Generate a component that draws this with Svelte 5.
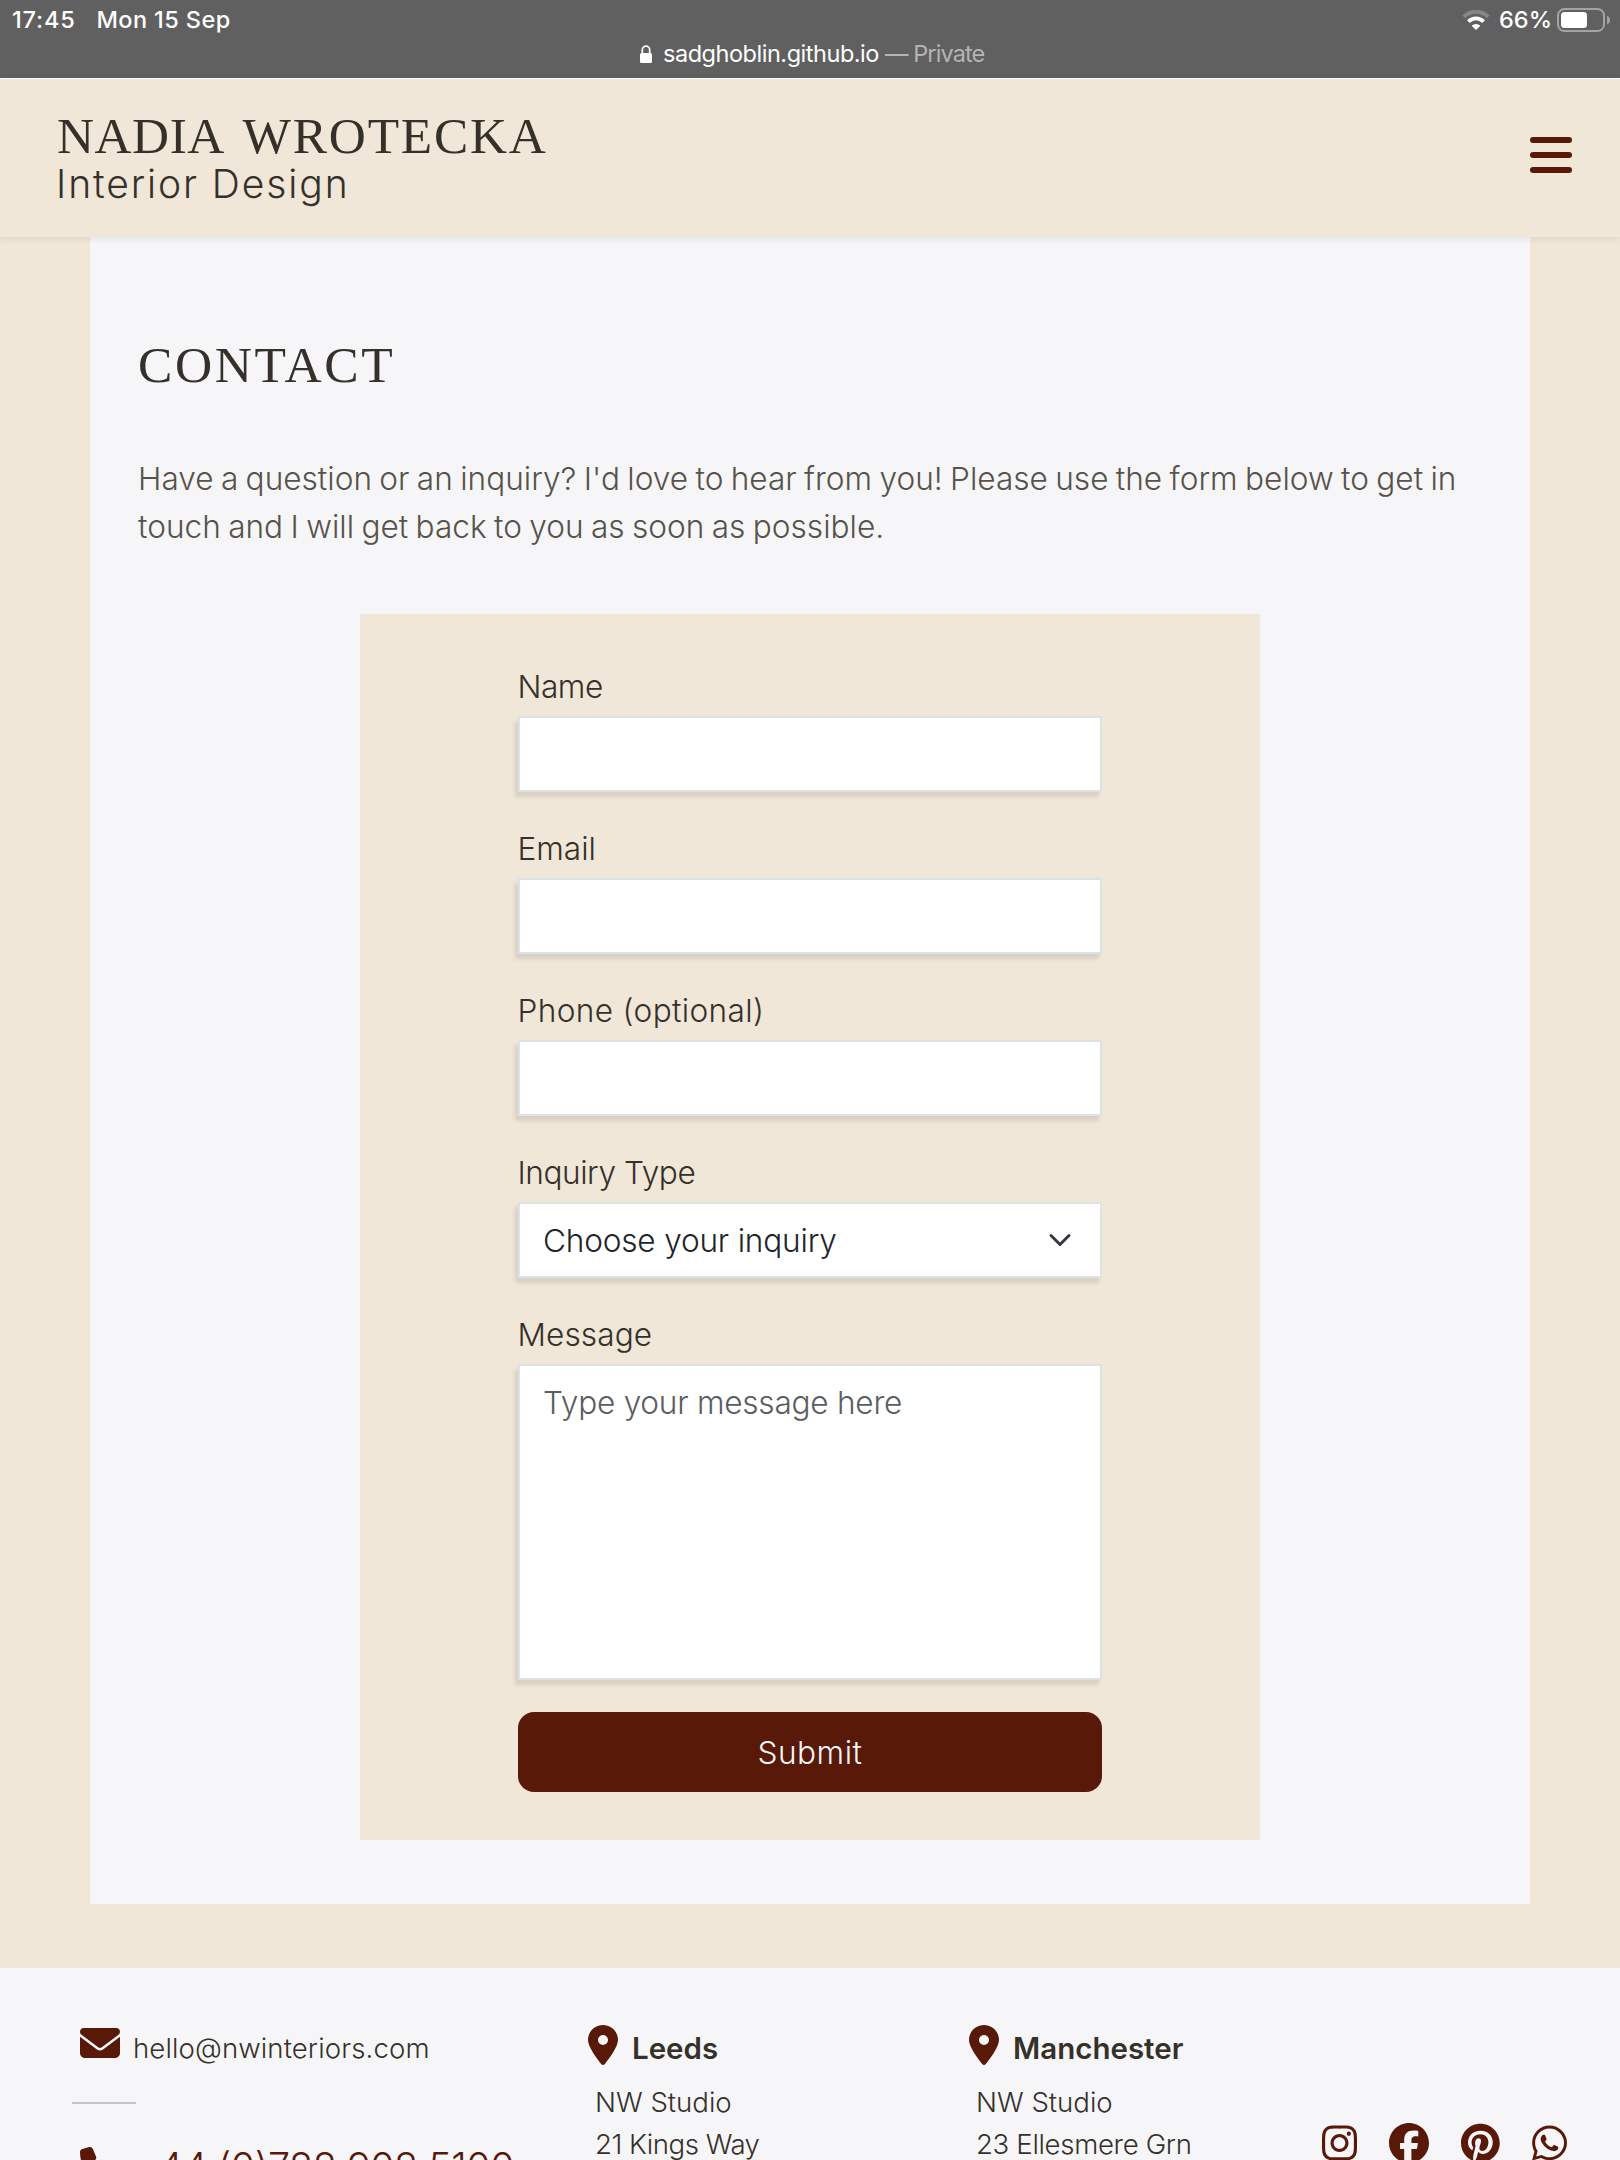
<script>
  const fields = [
    { id: 'name', label: 'Name', type: 'text' },
    { id: 'email', label: 'Email', type: 'email' },
    { id: 'phone', label: 'Phone (optional)', type: 'tel' },
  ];

  const studios = [
    { city: 'Leeds', key: 'leeds', street: '21 Kings Way' },
    { city: 'Manchester', key: 'manchester', street: '23 Ellesmere Grn' },
  ];

  const socials = [
    {
      name: 'Instagram',
      width: 448,
      d: 'M224.1 141c-63.6 0-114.9 51.3-114.9 114.9s51.3 114.9 114.9 114.9S339 319.5 339 255.9 287.7 141 224.1 141zm0 189.6c-41.1 0-74.7-33.5-74.7-74.7s33.5-74.7 74.7-74.7 74.7 33.5 74.7 74.7-33.6 74.7-74.7 74.7zm146.4-194.3c0 14.9-12 26.8-26.8 26.8-14.9 0-26.8-12-26.8-26.8s12-26.8 26.8-26.8 26.8 12 26.8 26.8zm76.1 27.2c-1.7-35.9-9.9-67.7-36.2-93.9-26.2-26.2-58-34.4-93.9-36.2-37-2.1-147.9-2.1-184.9 0-35.8 1.7-67.6 9.9-93.9 36.1s-34.4 58-36.2 93.9c-2.1 37-2.1 147.9 0 184.9 1.7 35.9 9.9 67.7 36.2 93.9s58 34.4 93.9 36.2c37 2.1 147.9 2.1 184.9 0 35.9-1.7 67.7-9.9 93.9-36.2 26.2-26.2 34.4-58 36.2-93.9 2.1-37 2.1-147.8 0-184.8zM398.8 388c-7.8 19.6-22.9 34.7-42.6 42.6-29.5 11.7-99.5 9-132.1 9s-102.7 2.6-132.1-9c-19.6-7.8-34.7-22.9-42.6-42.6-11.7-29.5-9-99.5-9-132.1s-2.6-102.7 9-132.1c7.8-19.6 22.9-34.7 42.6-42.6 29.5-11.7 99.5-9 132.1-9s102.7-2.6 132.1 9c19.6 7.8 34.7 22.9 42.6 42.6 11.7 29.5 9 99.5 9 132.1s2.7 102.7-9 132.1z',
    },
    {
      name: 'Facebook',
      width: 512,
      d: 'M512 256C512 114.6 397.4 0 256 0S0 114.6 0 256C0 376 82.7 476.8 194.2 504.5V334.2H141.4V256h52.8V222.3c0-87.1 39.4-127.5 125-127.5c16.2 0 44.2 3.2 55.7 6.4V172c-6-.6-16.5-1-29.6-1c-42 0-58.2 15.9-58.2 57.2V256h83.6l-14.4 78.2H287V510.1C413.8 494.8 512 386.9 512 256h0z',
    },
    {
      name: 'Pinterest',
      width: 496,
      d: 'M496 256c0 137-111 248-248 248-25.6 0-50.2-3.9-73.4-11.1 10.1-16.5 25.2-43.5 30.8-65 3-11.6 15.4-59 15.4-59 8.1 15.4 31.7 28.5 56.8 28.5 74.8 0 128.7-68.8 128.7-154.3 0-81.9-66.9-143.2-152.9-143.2-107 0-163.9 71.8-163.9 150.1 0 36.4 19.4 81.7 50.3 96.1 4.7 2.2 7.2 1.2 8.3-3.3.8-3.4 5-20.3 6.9-28.1.6-2.5.3-4.7-1.7-7.1-10.1-12.5-18.3-35.3-18.3-56.6 0-54.7 41.4-107.6 112-107.6 60.9 0 103.6 41.5 103.6 100.9 0 67.1-33.9 113.6-78 113.6-24.3 0-42.6-20.1-36.7-44.8 7-29.5 20.5-61.3 20.5-82.6 0-19-10.2-34.9-31.4-34.9-24.9 0-44.9 25.7-44.9 60.2 0 22 7.4 36.8 7.4 36.8s-24.5 103.8-29 123.2c-5 21.4-3 51.6-.9 71.2C65.4 450.9 0 361.1 0 256 0 119 111 8 248 8s248 111 248 248z',
    },
    {
      name: 'WhatsApp',
      width: 448,
      d: 'M380.9 97.1C339 55.1 283.2 32 223.9 32c-122.4 0-222 99.6-222 222 0 39.1 10.2 77.3 29.6 111L0 480l117.7-30.9c32.4 17.7 68.9 27 106.1 27h.1c122.3 0 224.1-99.6 224.1-222 0-59.3-25.2-115-67.1-157zm-157 341.6c-33.2 0-65.7-8.9-94-25.7l-6.7-4-69.8 18.3L72 359.2l-4.4-7c-18.5-29.4-28.2-63.3-28.2-98.2 0-101.7 82.8-184.5 184.6-184.5 49.3 0 95.6 19.2 130.4 54.1 34.8 34.9 56.2 81.2 56.1 130.5 0 101.8-84.9 184.6-186.6 184.6zm101.2-138.2c-5.5-2.8-32.8-16.2-37.9-18-5.1-1.9-8.8-2.8-12.5 2.8-3.7 5.6-14.3 18-17.6 21.8-3.2 3.7-6.5 4.2-12 1.4-32.6-16.3-54-29.1-75.5-66-5.7-9.8 5.7-9.1 16.3-30.3 1.8-3.7.9-6.9-.5-9.7-1.4-2.8-12.5-30.1-17.1-41.2-4.5-10.8-9.1-9.3-12.5-9.5-3.2-.2-6.9-.2-10.6-.2-3.7 0-9.7 1.4-14.8 6.9-5.1 5.6-19.4 19-19.4 46.3 0 27.3 19.9 53.7 22.6 57.4 2.8 3.7 39.1 59.7 94.8 83.8 35.2 15.2 49 16.5 66.6 13.9 10.7-1.6 32.8-13.4 37.4-26.4 4.6-13 4.6-24.1 3.2-26.4-1.3-2.5-5-3.9-10.5-6.6z',
    },
  ];
</script>

<div class="screen">
  <div class="device-bar">
    <div class="status-row">
      <span class="clock">17:45</span>
      <span class="date">Mon 15 Sep</span>
      <svg class="wifi" viewBox="0 0 28 20" width="28" height="20" fill="none">
        <path d="M1.8 6.8A17 17 0 0 1 26.2 6.8" stroke="#858585" stroke-width="4" />
        <path d="M6.4 11.6A10.8 10.8 0 0 1 21.6 11.6" stroke="#fff" stroke-width="3.8" />
        <path d="M14 20l-4.4-4.3a6.3 6.3 0 0 1 8.8 0z" fill="#fff" />
      </svg>
      <span class="percent">66%</span>
      <svg class="battery" viewBox="0 0 54 24" width="54" height="24">
        <rect x="1" y="1" width="46" height="22" rx="6.5" fill="none" stroke="#a3a3a3" stroke-width="2" />
        <rect x="4" y="4" width="26" height="16" rx="3.5" fill="#fff" />
        <path d="M50 8c4 1 4 7 0 8.500z" fill="#a3a3a3" />
      </svg>
    </div>
    <div class="address-row">
      <svg class="lock" viewBox="0 0 12 18" width="12" height="18">
        <path d="M2.300 8.500V5a3.700 3.900 0 0 1 7.400 0v3.500" fill="none" stroke="#fff" stroke-width="1.700" />
        <rect x="0" y="8" width="12" height="10" rx="1.500" fill="#fff" />
      </svg>
      <span class="host">sadghoblin.github.io</span>
      <span class="private">— Private</span>
    </div>
  </div>

  <header>
    <div class="brand">
      <div class="brand-name"><span class="first">NADIA</span> <span class="last">WROTECKA</span></div>
      <div class="brand-sub">Interior Design</div>
    </div>
    <div class="menu" aria-label="Menu"><i></i><i></i><i></i></div>
  </header>

  <main>
    <h1>CONTACT</h1>
    <p class="intro">
      <span>Have a question or an inquiry? I'd love to hear from you! Please use the form below to get in</span>
      <span>touch and I will get back to you as soon as possible.</span>
    </p>

    <form>
      {#each fields as field}
        <div class="field">
          <label class={field.id} for={field.id}>{field.label}</label>
          <input id={field.id} type={field.type} />
        </div>
      {/each}
      <div class="field">
        <label class="inquiry" for="inquiry">Inquiry Type</label>
        <div class="select">
          <select id="inquiry"><option>Choose your inquiry</option></select>
          <svg viewBox="0 0 16 16" width="24" height="24" fill="none">
            <path d="m2 5 6 6 6-6" stroke="#343a40" stroke-width="2" stroke-linecap="round" stroke-linejoin="round" />
          </svg>
        </div>
      </div>
      <div class="field">
        <label class="message" for="message">Message</label>
        <textarea id="message" placeholder="Type your message here"></textarea>
      </div>
      <button type="button">Submit</button>
    </form>
  </main>

  <footer>
    <div class="reach">
      <div class="mail">
        <svg class="icon" viewBox="0 0 512 512" width="40" height="40">
          <path d="M48 64C21.5 64 0 85.5 0 112c0 15.1 7.1 29.3 19.2 38.4L236.8 313.6c11.4 8.5 27 8.5 38.4 0L492.8 150.4c12.1-9.1 19.2-23.3 19.2-38.4c0-26.5-21.5-48-48-48H48zM0 176V384c0 35.3 28.7 64 64 64H448c35.3 0 64-28.7 64-64V176L294.4 339.2c-22.8 17.1-54 17.1-76.8 0L0 176z" />
        </svg>
        <span>hello@nwinteriors.com</span>
      </div>
      <div class="rule"></div>
      <div class="call">
        <svg class="icon" viewBox="0 0 512 512" width="40" height="40">
          <path d="M164.9 24.6c-7.7-18.6-28-28.5-47.4-23.2l-88 24C12.1 30.2 0 46 0 64C0 311.4 200.6 512 448 512c18 0 33.8-12.1 38.6-29.5l24-88c5.3-19.4-4.6-39.7-23.2-47.4l-96-40c-16.3-6.8-35.2-2.1-46.3 11.6L304.7 368C234.3 334.7 177.3 277.7 144 207.3L193.3 167c13.7-11.2 18.4-30 11.6-46.3l-40-96z" />
        </svg>
        <span>+44 (0)788 908 5100</span>
      </div>
    </div>

    {#each studios as studio}
      <div class="studio {studio.key}">
        <div class="city">
          <svg class="icon" viewBox="0 0 384 512" width="30" height="40">
            <path d="M215.7 499.2C267 435 384 279.4 384 192C384 86 298 0 192 0S0 86 0 192c0 87.4 117 243 168.3 307.2c12.3 15.3 35.1 15.3 47.4 0zM192 128a64 64 0 1 1 0 128 64 64 0 1 1 0-128z" />
          </svg>
          <strong>{studio.city}</strong>
        </div>
        <div class="address">
          <span class="unit">NW Studio</span>
          <span class="street">{studio.street}</span>
        </div>
      </div>
    {/each}

    <div class="socials">
      {#each socials as social}
        <svg class="icon" viewBox="0 0 {social.width} 512" height="40" width={social.width * 40 / 512} aria-label={social.name}>
          <path d={social.d} />
        </svg>
      {/each}
    </div>
  </footer>
</div>

<style>
  :global(body) {
    margin: 0;
    background: #f0e7d8;
  }

  .screen {
    box-sizing: border-box;
    display: flex;
    flex-direction: column;
    width: 1620px;
    height: 2160px;
    overflow: hidden;
    background: #f0e7d8;
    color: #35312a;
    font-family: Inter, 'Liberation Sans', sans-serif;
    font-weight: 340;
  }

  .screen span,
  .screen strong {
    white-space: nowrap;
  }

  svg {
    display: block;
    flex: none;
  }

  /* Tablet status bar */
  .device-bar {
    flex: none;
    box-sizing: border-box;
    height: 79px;
    border-bottom: 1px solid #fff;
    background: #606060;
    color: #fff;
    font-size: 23.5px;
  }

  .status-row {
    display: flex;
    align-items: flex-start;
    height: 38px;
    padding: 0 10px 0 12px;
    font-weight: 500;
    line-height: 39px;
  }

  .clock {
    letter-spacing: 0.8px;
  }

  .date {
    margin: 0 auto 0 21px;
    letter-spacing: 0.4px;
  }

  .wifi {
    margin: 10px 9px 0 0;
  }

  .percent {
    margin-right: 5px;
  }

  .battery {
    margin-top: 8px;
    margin-right: -1px;
  }

  .address-row {
    display: flex;
    justify-content: flex-start;
    padding-left: 640px;
    font-weight: 400;
    line-height: 32px;
    letter-spacing: -0.47px;
  }

  .lock {
    margin: 7px 11px 0 0;
  }

  .private {
    margin-left: 6px;
    color: #b4b4b4;
    letter-spacing: -0.9px;
  }

  /* Site header */
  header {
    position: relative;
    z-index: 1;
    flex: none;
    box-sizing: border-box;
    display: flex;
    justify-content: space-between;
    align-items: flex-start;
    height: 158px;
    padding: 27px 48px 0 57px;
    background: #f0e7d8;
    box-shadow: 0 2px 8px rgba(0, 0, 0, 0.08);
  }

  .brand-name {
    font: 400 51.3px/60px 'Liberation Serif', serif;
    word-spacing: 5px;
    white-space: nowrap;
  }

  .first {
    letter-spacing: 0.5px;
  }

  .last {
    letter-spacing: 1.8px;
  }

  .brand-sub {
    margin-left: -1px;
    font-size: 39px;
    line-height: 35px;
    font-weight: 270;
    letter-spacing: 1.9px;
  }

  .menu {
    display: flex;
    flex-direction: column;
    gap: 9px;
    margin-top: 31px;
  }

  .menu i {
    width: 42px;
    height: 6px;
    border-radius: 3px;
    background: #581908;
  }

  /* Contact panel */
  main {
    flex: none;
    box-sizing: border-box;
    width: 1440px;
    height: 1667px;
    margin: 0 auto;
    padding: 99px 48px 0;
    background: #f6f6f8;
  }

  h1 {
    margin: 0;
    font: 400 51.5px/58px 'Liberation Serif', serif;
    letter-spacing: 2.6px;
  }

  .intro {
    display: flex;
    flex-direction: column;
    margin: 61px 0 63px;
    color: #57534a;
    font-size: 31.6px;
    line-height: 48px;
    letter-spacing: 0;
    word-spacing: -1.5px;
  }

  form {
    box-sizing: border-box;
    display: flex;
    flex-direction: column;
    gap: 32px;
    width: 900px;
    height: 1226px;
    margin: 0 auto;
    padding: 48px 158px;
    background: #f0e7d8;
    font-size: 31.6px;
  }

  .field {
    display: flex;
    flex-direction: column;
    align-items: stretch;
    gap: 5px;
  }

  label {
    margin-left: -0.5px;
    padding-top: 1px;
    line-height: 48px;
  }

  .name {
    letter-spacing: -0.5px;
  }

  .email {
    letter-spacing: 0;
  }

  .phone {
    letter-spacing: 0.35px;
  }

  .inquiry {
    letter-spacing: -0.45px;
  }

  .message {
    letter-spacing: 0.1px;
  }

  input,
  select,
  textarea {
    box-sizing: border-box;
    display: block;
    width: 584px;
    height: 76px;
    margin: 0;
    padding: 0 23px;
    border: 2px solid #dee2e6;
    border-radius: 0;
    outline: 0;
    background: #fff;
    box-shadow: -3px 5px 4px rgba(0, 0, 0, 0.1);
    color: #212529;
    font: inherit;
    letter-spacing: -0.2px;
    appearance: none;
  }

  textarea {
    height: 316px;
    padding: 13px 23px;
    line-height: 48px;
    letter-spacing: -0.25px;
    resize: none;
  }

  textarea::placeholder {
    color: #5a5e62;
    opacity: 1;
  }

  .select {
    position: relative;
  }

  .select svg {
    position: absolute;
    top: 26px;
    right: 30px;
  }

  button {
    height: 80px;
    padding: 0;
    border: 0;
    border-radius: 16px;
    background: #581908;
    color: #f6f6f8;
    font: inherit;
    letter-spacing: 0.5px;
  }

  /* Footer */
  footer {
    flex: none;
    box-sizing: border-box;
    display: grid;
    grid-template-columns: 516px 381px 353px 245px;
    height: 192px;
    margin-top: 64px;
    padding: 55px 53px 0 72px;
    background: #f6f6f8;
    font-size: 27.6px;
    line-height: 42px;
  }

  .icon {
    fill: #581908;
  }

  .mail,
  .call,
  .city {
    display: flex;
    align-items: flex-start;
  }

  .mail,
  .call {
    padding-left: 8px;
  }

  .mail span {
    margin: 4px 0 0 13px;
    letter-spacing: 0.1px;
  }

  .rule {
    width: 64px;
    height: 2px;
    margin: 33px 0 43px;
    background: #c5c5c8;
  }

  .call span {
    margin: -8px 0 0 13px;
    color: #581908;
    font-size: 39.5px;
    line-height: 56px;
    letter-spacing: -0.5px;
  }

  .city {
    padding-top: 2px;
  }

  .city strong {
    margin: 2px 0 0 14px;
    font-size: 29.5px;
    font-weight: 600;
    line-height: 43px;
    letter-spacing: 0;
  }

  .address {
    display: flex;
    flex-direction: column;
    margin: 11px 0 0 7px;
  }

  .unit {
    letter-spacing: 0;
  }

  .street {
    letter-spacing: -0.5px;
  }

  .manchester .street {
    letter-spacing: -0.35px;
  }

  .socials {
    display: flex;
    justify-content: space-between;
    padding-top: 100px;
  }
</style>
